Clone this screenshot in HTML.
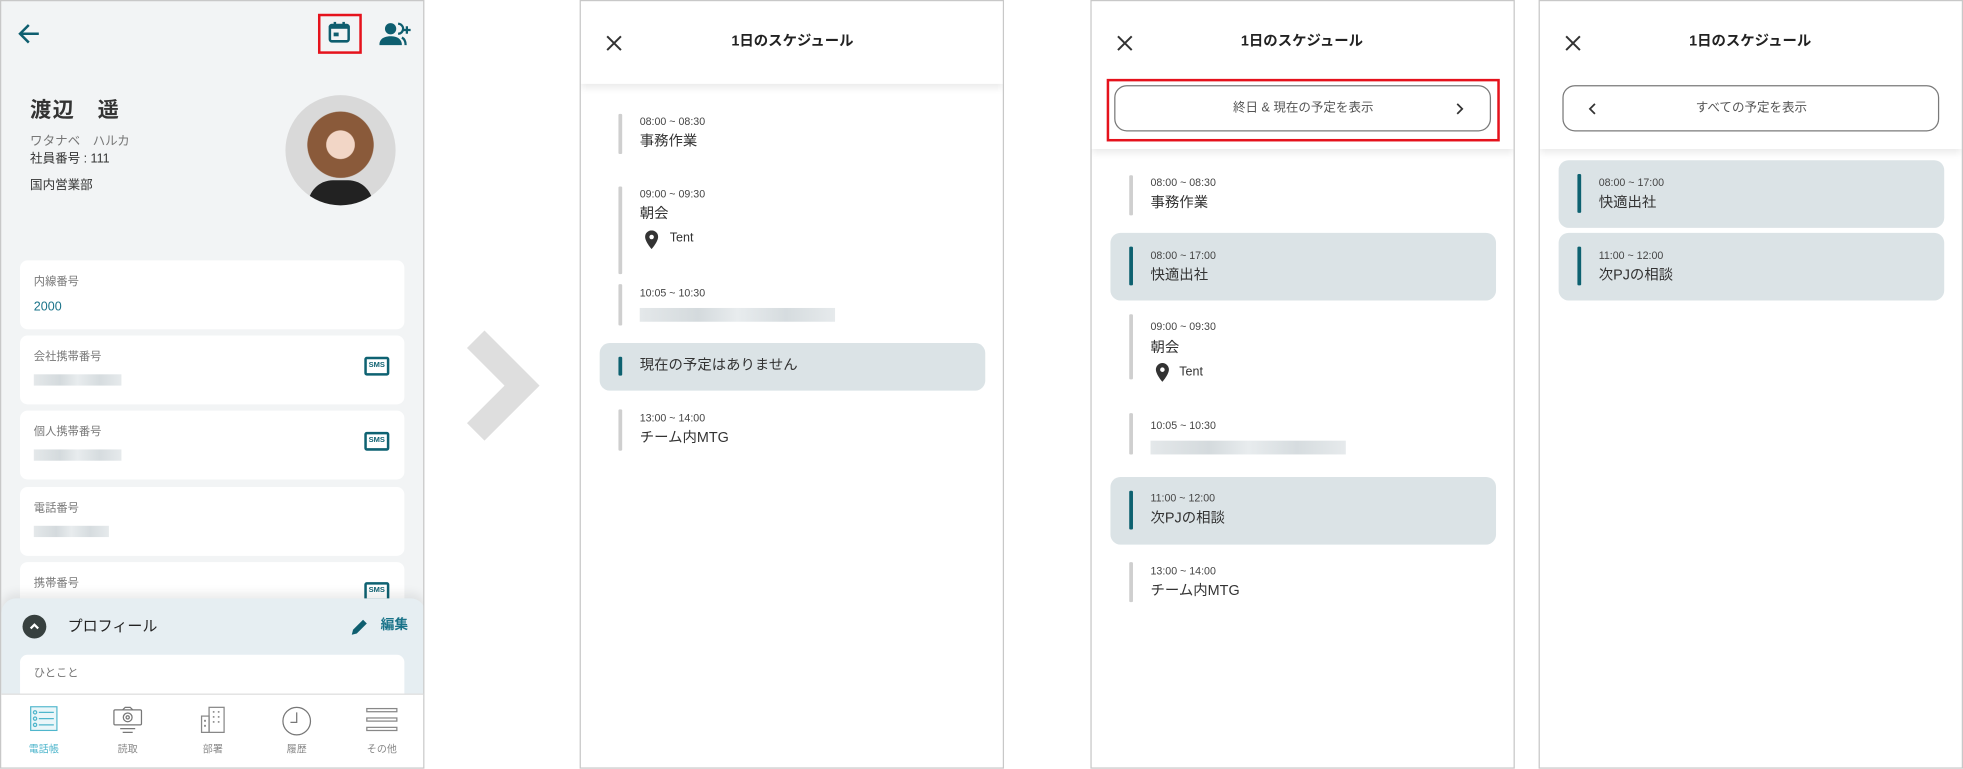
<!DOCTYPE html>
<html><head><meta charset="utf-8"><style>
*{margin:0;padding:0;box-sizing:border-box}
html,body{width:1963px;height:769px;overflow:hidden;background:#fff}
body{font-family:"Liberation Sans","Noto Sans CJK JP",sans-serif;color:#333}
#w{position:absolute;left:0;top:0;width:1568px;height:614px;transform:scale(1.25191);transform-origin:0 0}
.a{position:absolute}
.t{position:absolute;transform:translateY(-50%);white-space:nowrap;line-height:1}
.panel{position:absolute;top:0;height:614px;border:1px solid #c8c8c8;overflow:hidden;background:#fff}
.card{position:absolute;left:15px;width:307px;background:#fff;border-radius:6px}
.lbl{font-size:9px;color:#777}
.blur{position:absolute;height:9px;background:linear-gradient(90deg,#e4e8ea,#d4dadd 30%,#e8ecee 50%,#d6dcdf 75%,#e6eaec)}
.sms{position:absolute;left:275px;width:20px;height:15px;border:2px solid #0e6272;border-radius:2px;font-size:6px;font-weight:bold;color:#0e6272;text-align:center;line-height:11px}
.hdr{position:absolute;left:0;top:0;width:100%;background:#fff;box-shadow:0 3px 6px rgba(0,0,0,.09);z-index:2}
.ttl{font-size:11.5px;font-weight:bold;color:#222}
.bar{position:absolute;width:2.5px;background:#cfcfcf;border-radius:1px}
.bar.tl{background:#0d6170}
.tm{font-size:8.5px;color:#444}
.ev{font-size:11.5px;color:#333}
.hl{position:absolute;background:#dbe3e6;border-radius:8px}
.btn{position:absolute;height:37px;border:1px solid #7a7a7a;border-radius:10px;background:#fff}
.nl{font-size:8px;color:#888;width:50px;text-align:center;transform:translate(-50%,-50%)}
</style></head><body><div id="w">

<!-- Panel 1 -->
<div class="panel" style="left:0;width:339px;background:#f2f4f5">
 <svg class="a" style="left:12px;top:17px" width="20" height="18" viewBox="0 0 20 18"><path d="M18 9H4M10 2L3 9l7 7" fill="none" stroke="#0e5e6f" stroke-width="2"/></svg>
 <div class="a" style="left:253px;top:10px;width:35px;height:32px;border:2px solid #e5121c"></div>
 <svg class="a" style="left:261px;top:16px" width="18" height="18" viewBox="0 0 18 18"><rect x="1.5" y="3" width="15" height="13" rx="1.5" fill="none" stroke="#0e5e6f" stroke-width="2"/><rect x="1.5" y="3" width="15" height="3" fill="#0e5e6f"/><rect x="4.5" y="0.5" width="2" height="3" fill="#0e5e6f"/><rect x="11.5" y="0.5" width="2" height="3" fill="#0e5e6f"/><rect x="4.5" y="9" width="4" height="3" fill="#0e5e6f"/></svg>
 <svg class="a" style="left:302px;top:16px" width="26" height="20" viewBox="0 0 26 20"><circle cx="9" cy="6" r="4.5" fill="#0e5e6f"/><path d="M0 19c0-5 4-7 9-7s9 2 9 7z" fill="#0e5e6f"/><path d="M15 2a4 4 0 010 8M18 13c2 1 3 3 3 6" fill="none" stroke="#0e5e6f" stroke-width="1.8"/><path d="M22 4v6M19 7h6" stroke="#0e5e6f" stroke-width="1.8"/></svg>
 <div class="t" style="left:23px;top:87px;font-size:17px;font-weight:bold;color:#333;letter-spacing:1px">渡辺　遥</div>
 <div class="t" style="left:23px;top:113px;font-size:10px;color:#777">ワタナベ　ハルカ</div>
 <div class="t" style="left:23px;top:127px;font-size:10px;color:#333">社員番号 : 111</div>
 <div class="t" style="left:23px;top:148px;font-size:10px;color:#333">国内営業部</div>
 <div class="a" style="left:227px;top:75px;width:88px;height:88px;border-radius:50%;background:radial-gradient(circle at 50% 45%,#f2d6c6 0 17%,#8a5a3a 18% 40%,#d9d9d9 41%);overflow:hidden"><div class="a" style="left:18px;top:68px;width:52px;height:22px;background:#222;border-radius:20px 20px 0 0"></div></div>
 <div class="card" style="top:207px;height:55px"><div class="t lbl" style="left:11px;top:17px">内線番号</div><div class="t" style="left:11px;top:38px;font-size:10px;color:#1a7389">2000</div></div>
 <div class="card" style="top:267px;height:55px"><div class="t lbl" style="left:11px;top:17px">会社携帯番号</div><div class="blur" style="left:11px;top:31px;width:70px"></div><div class="sms" style="top:17px">SMS</div></div>
 <div class="card" style="top:327px;height:55px"><div class="t lbl" style="left:11px;top:17px">個人携帯番号</div><div class="blur" style="left:11px;top:31px;width:70px"></div><div class="sms" style="top:17px">SMS</div></div>
 <div class="card" style="top:388px;height:55px"><div class="t lbl" style="left:11px;top:17px">電話番号</div><div class="blur" style="left:11px;top:31px;width:60px"></div></div>
 <div class="card" style="top:448px;height:40px"><div class="t lbl" style="left:11px;top:17px">携帯番号</div><div class="sms" style="top:16px">SMS</div></div>
 <div class="a" style="left:0;top:477px;width:339px;height:80px;background:#e6eef2;border-radius:12px 12px 0 0;box-shadow:0 -4px 8px rgba(0,0,0,.08)"></div>
 <div class="a" style="left:17px;top:490px;width:19px;height:19px;border-radius:50%;background:#37403f"></div>
 <svg class="a" style="left:21px;top:494px" width="11" height="11" viewBox="0 0 11 11"><path d="M2.5 7l3-3 3 3" fill="none" stroke="#fff" stroke-width="1.8"/></svg>
 <div class="t" style="left:53px;top:499px;font-size:12px;color:#222">プロフィール</div>
 <svg class="a" style="left:279px;top:492px" width="15" height="15" viewBox="0 0 15 15"><path d="M1 14l1-4 8-8 3 3-8 8z" fill="#0e5e6f"/></svg>
 <div class="t" style="left:303px;top:499px;font-size:11px;color:#1a7389;font-weight:bold">編集</div>
 <div class="card" style="top:522px;height:40px"><div class="t lbl" style="left:11px;top:15px">ひとこと</div></div>
 <div class="a" style="left:0;top:553px;width:339px;height:61px;background:#fff;border-top:1px solid #ddd"></div>
 <svg class="a" style="left:23px;top:563px" width="22" height="20" viewBox="0 0 22 20"><rect x="0.5" y="0.5" width="21" height="19" fill="#eaf6f9" stroke="#4fb6cc"/><g fill="none" stroke="#4fb6cc"><circle cx="4" cy="5" r="1.3"/><circle cx="4" cy="10" r="1.3"/><circle cx="4" cy="15" r="1.3"/><path d="M7 5h12M7 10h12M7 15h12"/></g></svg>
 <svg class="a" style="left:89px;top:563px" width="24" height="22" viewBox="0 0 24 22"><g fill="none" stroke="#777"><rect x="1" y="3" width="22" height="12" rx="1"/><path d="M8 3l2-2h4l2 2"/><circle cx="12" cy="9" r="3.5"/><circle cx="12" cy="9" r="1.3"/><path d="M6 18h12M8 21h8"/></g></svg>
 <svg class="a" style="left:159px;top:563px" width="20" height="22" viewBox="0 0 20 22"><g fill="none" stroke="#888"><rect x="1" y="8" width="6" height="13"/><rect x="7" y="1" width="12" height="20"/></g><g fill="#888"><rect x="3" y="11" width="1.5" height="1.5"/><rect x="3" y="15" width="1.5" height="1.5"/><rect x="10" y="4" width="1.3" height="1.3"/><rect x="14" y="4" width="1.3" height="1.3"/><rect x="10" y="8" width="1.3" height="1.3"/><rect x="14" y="8" width="1.3" height="1.3"/><rect x="10" y="12" width="1.3" height="1.3"/><rect x="14" y="12" width="1.3" height="1.3"/></g></svg>
 <svg class="a" style="left:224px;top:563px" width="24" height="24" viewBox="0 0 24 24"><circle cx="12" cy="12" r="11" fill="none" stroke="#777"/><path d="M12 5v8H7" fill="none" stroke="#777"/></svg>
 <svg class="a" style="left:291px;top:564px" width="26" height="20" viewBox="0 0 26 20"><g fill="none" stroke="#888"><rect x="1" y="1" width="24" height="2.5"/><rect x="1" y="8.5" width="24" height="2.5"/><rect x="1" y="16" width="24" height="2.5"/></g></svg>
 <div class="t nl" style="left:34px;top:598px;color:#4fb6cc">電話帳</div>
 <div class="t nl" style="left:101px;top:598px">読取</div>
 <div class="t nl" style="left:169px;top:598px">部署</div>
 <div class="t nl" style="left:236px;top:598px">履歴</div>
 <div class="t nl" style="left:304px;top:598px">その他</div>
</div>

<!-- big arrow -->
<svg class="a" style="left:370px;top:262px" width="62" height="92" viewBox="0 0 62 92"><path d="M3 16L17 2l44 44-44 44L3 76l30-30z" fill="#dedede"/></svg>

<!-- Panel 2 -->
<div class="panel" style="left:463px;width:339px">
 <div class="hdr" style="height:66px">
  <svg class="a" style="left:20px;top:27px" width="13" height="13" viewBox="0 0 13 13"><path d="M1 1l11 11M12 1L1 12" stroke="#333" stroke-width="1.6"/></svg>
  <div class="t ttl" style="left:169px;top:33px;transform:translate(-50%,-50%)">1日のスケジュール</div>
 </div>
 <div class="bar" style="left:30px;top:90px;height:32px"></div>
 <div class="t tm" style="left:47px;top:96px">08:00 ~ 08:30</div>
 <div class="t ev" style="left:47px;top:113px">事務作業</div>
 <div class="bar" style="left:30px;top:148px;height:70px"></div>
 <div class="t tm" style="left:47px;top:154px">09:00 ~ 09:30</div>
 <div class="t ev" style="left:47px;top:171px">朝会</div>
 <svg class="a" style="left:51px;top:183px" width="11" height="15" viewBox="0 0 11 15"><path d="M5.5 0A5.2 5.2 0 000.3 5.2C0.3 9 5.5 15 5.5 15s5.2-6 5.2-9.8A5.2 5.2 0 005.5 0z" fill="#333"/><circle cx="5.5" cy="5.3" r="1.8" fill="#fff"/></svg>
 <div class="t" style="left:71px;top:190px;font-size:10px;color:#333">Tent</div>
 <div class="bar" style="left:30px;top:226px;height:33px"></div>
 <div class="t tm" style="left:47px;top:233px">10:05 ~ 10:30</div>
 <div class="blur" style="left:47px;top:245px;width:156px;height:11px"></div>
 <div class="hl" style="left:15px;top:273px;width:308px;height:38px"></div>
 <div class="bar tl" style="left:30px;top:284px;height:15px"></div>
 <div class="t ev" style="left:47px;top:292px">現在の予定はありません</div>
 <div class="bar" style="left:30px;top:326px;height:33px"></div>
 <div class="t tm" style="left:47px;top:333px">13:00 ~ 14:00</div>
 <div class="t ev" style="left:47px;top:350px">チーム内MTG</div>
</div>

<!-- Panel 3 -->
<div class="panel" style="left:871px;width:339px">
 <div class="hdr" style="height:118px">
  <svg class="a" style="left:20px;top:27px" width="13" height="13" viewBox="0 0 13 13"><path d="M1 1l11 11M12 1L1 12" stroke="#333" stroke-width="1.6"/></svg>
  <div class="t ttl" style="left:168px;top:33px;transform:translate(-50%,-50%)">1日のスケジュール</div>
  <div class="a" style="left:12px;top:62px;width:314px;height:50px;border:2px solid #e5121c"></div>
  <div class="btn" style="left:18px;top:67px;width:301px"></div>
  <div class="t" style="left:169px;top:86px;font-size:10px;color:#555;transform:translate(-50%,-50%)">終日 &amp; 現在の予定を表示</div>
  <svg class="a" style="left:290px;top:81px" width="8" height="10" viewBox="0 0 8 10"><path d="M2 1l4 4-4 4" fill="none" stroke="#333" stroke-width="1.4"/></svg>
 </div>
 <div class="bar" style="left:30px;top:139px;height:32px"></div>
 <div class="t tm" style="left:47px;top:145px">08:00 ~ 08:30</div>
 <div class="t ev" style="left:47px;top:162px">事務作業</div>
 <div class="hl" style="left:15px;top:185px;width:308px;height:54px"></div>
 <div class="bar tl" style="left:30px;top:196px;height:31px"></div>
 <div class="t tm" style="left:47px;top:203px">08:00 ~ 17:00</div>
 <div class="t ev" style="left:47px;top:220px">快適出社</div>
 <div class="bar" style="left:30px;top:250px;height:52px"></div>
 <div class="t tm" style="left:47px;top:260px">09:00 ~ 09:30</div>
 <div class="t ev" style="left:47px;top:278px">朝会</div>
 <svg class="a" style="left:51px;top:289px" width="11" height="15" viewBox="0 0 11 15"><path d="M5.5 0A5.2 5.2 0 000.3 5.2C0.3 9 5.5 15 5.5 15s5.2-6 5.2-9.8A5.2 5.2 0 005.5 0z" fill="#333"/><circle cx="5.5" cy="5.3" r="1.8" fill="#fff"/></svg>
 <div class="t" style="left:70px;top:297px;font-size:10px;color:#333">Tent</div>
 <div class="bar" style="left:30px;top:329px;height:33px"></div>
 <div class="t tm" style="left:47px;top:339px">10:05 ~ 10:30</div>
 <div class="blur" style="left:47px;top:351px;width:156px;height:11px"></div>
 <div class="hl" style="left:15px;top:380px;width:308px;height:54px"></div>
 <div class="bar tl" style="left:30px;top:391px;height:31px"></div>
 <div class="t tm" style="left:47px;top:397px">11:00 ~ 12:00</div>
 <div class="t ev" style="left:47px;top:414px">次PJの相談</div>
 <div class="bar" style="left:30px;top:448px;height:32px"></div>
 <div class="t tm" style="left:47px;top:455px">13:00 ~ 14:00</div>
 <div class="t ev" style="left:47px;top:472px">チーム内MTG</div>
</div>

<!-- Panel 4 -->
<div class="panel" style="left:1229px;width:339px">
 <div class="hdr" style="height:118px">
  <svg class="a" style="left:20px;top:27px" width="13" height="13" viewBox="0 0 13 13"><path d="M1 1l11 11M12 1L1 12" stroke="#333" stroke-width="1.6"/></svg>
  <div class="t ttl" style="left:168px;top:33px;transform:translate(-50%,-50%)">1日のスケジュール</div>
  <div class="btn" style="left:18px;top:67px;width:301px"></div>
  <svg class="a" style="left:38px;top:81px" width="8" height="10" viewBox="0 0 8 10"><path d="M6 1L2 5l4 4" fill="none" stroke="#333" stroke-width="1.4"/></svg>
  <div class="t" style="left:169px;top:86px;font-size:10px;color:#555;transform:translate(-50%,-50%)">すべての予定を表示</div>
 </div>
 <div class="hl" style="left:15px;top:127px;width:308px;height:54px"></div>
 <div class="bar tl" style="left:30px;top:138px;height:31px"></div>
 <div class="t tm" style="left:47px;top:145px">08:00 ~ 17:00</div>
 <div class="t ev" style="left:47px;top:162px">快適出社</div>
 <div class="hl" style="left:15px;top:185px;width:308px;height:54px"></div>
 <div class="bar tl" style="left:30px;top:196px;height:31px"></div>
 <div class="t tm" style="left:47px;top:203px">11:00 ~ 12:00</div>
 <div class="t ev" style="left:47px;top:220px">次PJの相談</div>
</div>

</div></body></html>
